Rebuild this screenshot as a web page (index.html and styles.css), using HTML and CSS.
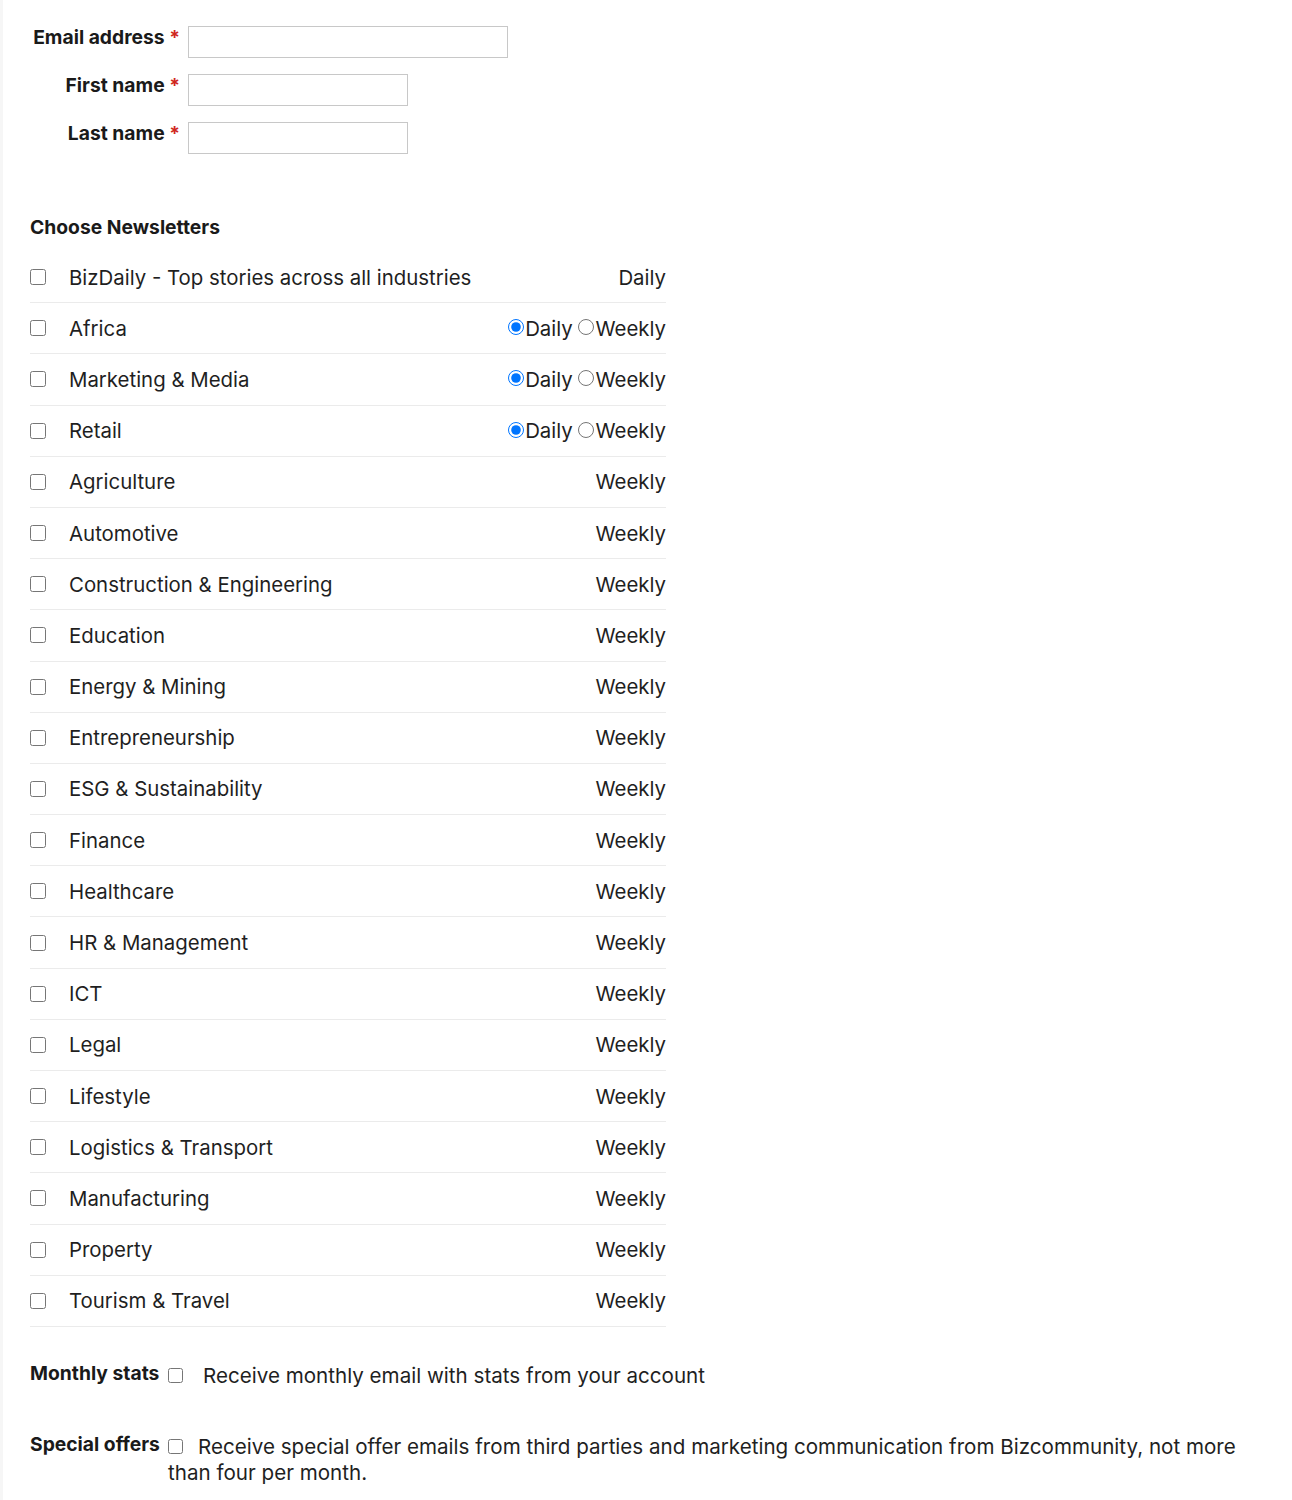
FILE: index.html
```html
<!DOCTYPE html>
<html>
<head>
<meta charset="utf-8">
<link rel="stylesheet" href="styles.css">
</head>
<body>
<div class="page">
  <form class="form">
    <div class="fields">
      <label class="flabel">Email address <span class="req">*</span></label>
      <input class="input wide" type="text">
      <label class="flabel">First name <span class="req">*</span></label>
      <input class="input" type="text">
      <label class="flabel">Last name <span class="req">*</span></label>
      <input class="input" type="text">
    </div>

    <h3 class="heading">Choose Newsletters</h3>
    <div class="list">
      <div class="row"><span class="name"><input type="checkbox" class="cb">BizDaily - Top stories across all industries</span><span class="freq">Daily</span></div>
      <div class="row"><span class="name"><input type="checkbox" class="cb">Africa</span><span class="freq"><input type="radio" name="f1" class="rd" checked>Daily <input type="radio" name="f1" class="rd">Weekly</span></div>
      <div class="row"><span class="name"><input type="checkbox" class="cb">Marketing &amp; Media</span><span class="freq"><input type="radio" name="f2" class="rd" checked>Daily <input type="radio" name="f2" class="rd">Weekly</span></div>
      <div class="row"><span class="name"><input type="checkbox" class="cb">Retail</span><span class="freq"><input type="radio" name="f3" class="rd" checked>Daily <input type="radio" name="f3" class="rd">Weekly</span></div>
      <div class="row"><span class="name"><input type="checkbox" class="cb">Agriculture</span><span class="freq">Weekly</span></div>
      <div class="row"><span class="name"><input type="checkbox" class="cb">Automotive</span><span class="freq">Weekly</span></div>
      <div class="row"><span class="name"><input type="checkbox" class="cb">Construction &amp; Engineering</span><span class="freq">Weekly</span></div>
      <div class="row"><span class="name"><input type="checkbox" class="cb">Education</span><span class="freq">Weekly</span></div>
      <div class="row"><span class="name"><input type="checkbox" class="cb">Energy &amp; Mining</span><span class="freq">Weekly</span></div>
      <div class="row"><span class="name"><input type="checkbox" class="cb">Entrepreneurship</span><span class="freq">Weekly</span></div>
      <div class="row"><span class="name"><input type="checkbox" class="cb">ESG &amp; Sustainability</span><span class="freq">Weekly</span></div>
      <div class="row"><span class="name"><input type="checkbox" class="cb">Finance</span><span class="freq">Weekly</span></div>
      <div class="row"><span class="name"><input type="checkbox" class="cb">Healthcare</span><span class="freq">Weekly</span></div>
      <div class="row"><span class="name"><input type="checkbox" class="cb">HR &amp; Management</span><span class="freq">Weekly</span></div>
      <div class="row"><span class="name"><input type="checkbox" class="cb">ICT</span><span class="freq">Weekly</span></div>
      <div class="row"><span class="name"><input type="checkbox" class="cb">Legal</span><span class="freq">Weekly</span></div>
      <div class="row"><span class="name"><input type="checkbox" class="cb">Lifestyle</span><span class="freq">Weekly</span></div>
      <div class="row"><span class="name"><input type="checkbox" class="cb">Logistics &amp; Transport</span><span class="freq">Weekly</span></div>
      <div class="row"><span class="name"><input type="checkbox" class="cb">Manufacturing</span><span class="freq">Weekly</span></div>
      <div class="row"><span class="name"><input type="checkbox" class="cb">Property</span><span class="freq">Weekly</span></div>
      <div class="row"><span class="name"><input type="checkbox" class="cb">Tourism &amp; Travel</span><span class="freq">Weekly</span></div>
    </div>

    <div class="opt opt-monthly">
      <span class="olabel">Monthly stats</span>
      <p class="otext"><input type="checkbox" class="ocb"><span class="gap-l">Receive monthly email with stats from your account</span></p>
    </div>
    <div class="opt opt-special">
      <span class="olabel">Special offers</span>
      <p class="otext"><input type="checkbox" class="ocb">Receive special offer emails from third parties and marketing communication from Bizcommunity, not more than four per month.</p>
    </div>
  </form>
</div>
</body>
</html>
```
FILE: styles.css
```css
html, body {
  margin: 0;
  padding: 0;
  background: #fff;
}
body {
  font-family: Inter, Roboto, "Liberation Sans", Arial, sans-serif;
  color: #1f1f1f;
}
.page {
  border-left: 3px solid #f6f6f6;
  min-height: 1500px;
  padding: 26px 30px 0 27px;
  box-sizing: border-box;
}
.fields {
  display: grid;
  grid-template-columns: 150px auto;
  column-gap: 8px;
  row-gap: 16px;
  justify-items: start;
}
.flabel {
  justify-self: end;
  font-weight: 700;
  font-size: 19.3px;
  line-height: 22px;
  padding-top: 0;
  color: #1a1a1a;
  white-space: nowrap;
}
.req {
  color: #d0281e;
}
.input {
  width: 220px;
  height: 32px;
  box-sizing: border-box;
  border: 1px solid #c8c8c8;
  margin: 0;
  padding: 2px 6px;
  font-size: 16px;
}
.wide {
  width: 320px;
}
.heading {
  margin: 62px 0 14px;
  font-size: 19.3px;
  line-height: 22px;
  font-weight: 700;
  color: #1a1a1a;
}
.list {
  width: 636px;
}
.row {
  display: flex;
  justify-content: space-between;
  align-items: center;
  height: 51.2px;
  padding-top: 0;
  box-sizing: border-box;
  border-bottom: 1px solid #ebebeb;
  font-size: 20.4px;
  color: #1f1f1f;
}
.name {
  display: flex;
  align-items: center;
}
.cb {
  width: 16px;
  height: 16px;
  margin: 0 23px 0 0;
}
.freq {
  display: flex;
  align-items: center;
  white-space: pre;
}
.rd {
  width: 16px;
  height: 16px;
  margin: 0 1px 2px 0;
}
.opt {
  display: flex;
  align-items: flex-start;
  font-size: 20.6px;
}
.opt-monthly {
  margin-top: 34px;
}
.opt-special {
  margin-top: 43px;
}
.olabel {
  font-weight: 700;
  font-size: 19.3px;
  line-height: 22px;
  color: #1a1a1a;
  white-space: nowrap;
  flex: none;
  width: 138px;
  padding-top: 1px;
}
.otext {
  margin: 0;
  padding-top: 2px;
  line-height: 26px;
  color: #1f1f1f;
}
.ocb {
  width: 15px;
  height: 15px;
  margin: 0 15px 0 0;
  vertical-align: 0;
}
.gap-l {
  margin-left: 5px;
}
```
